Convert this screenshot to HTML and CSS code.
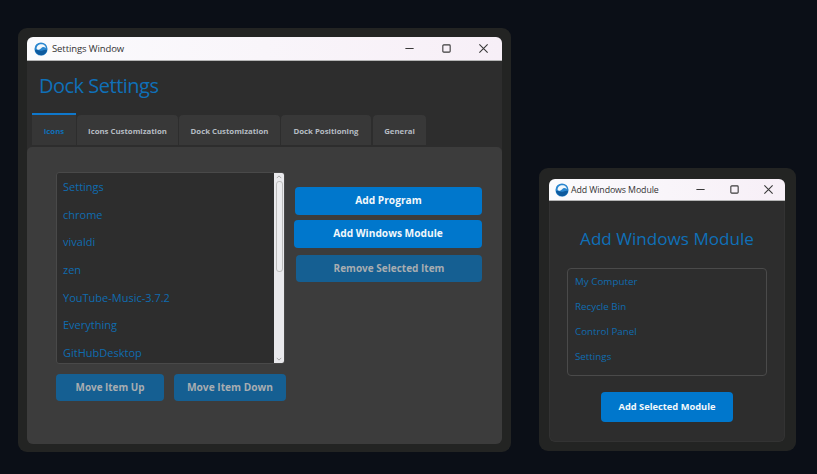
FILE: index.html
```html
<!DOCTYPE html>
<html lang="en">
<head>
<meta charset="utf-8">
<title>Dock Settings</title>
<link rel="stylesheet" href="styles.css">
</head>
<body>
<section class="frame frame-settings">
  <div class="window">
    <header class="titlebar">
      <svg class="app-icon" viewBox="0 0 16 16"><circle cx="8" cy="8" r="7.500" fill="#2a86cf"/><path d="M1 9.500c2-1.500 3.500.5 6.500.5s4.500-2 7.500-1c-.8 3.500-3.500 6-7 6s-6-2.500-7-5.500z" fill="#0e5a9e"/><path d="M3 8c-.3-3.500 3-6 6.500-5.300C12 3.200 13.500 5 13.500 7c-2-1.700-4-1.500-5.300 0C7 8.500 4.500 9.500 3 8z" fill="#f2f8fc"/></svg>
      <span class="window-title">Settings Window</span>
      <div class="controls">
        <svg class="ctl" viewBox="0 0 12 12"><path d="M1.500 6h9"/></svg>
        <svg class="ctl" viewBox="0 0 12 12"><rect x="2" y="2" width="8" height="8" rx="1"/></svg>
        <svg class="ctl" viewBox="0 0 12 12"><path d="M1.500 1.500l9 9M10.500 1.500l-9 9"/></svg>
      </div>
    </header>
    <div class="settings-body">
      <h1 class="heading">Dock Settings</h1>
      <nav class="tabs">
        <span class="tab tab-active">Icons</span>
        <span class="tab tab-ic">Icons Customization</span>
        <span class="tab tab-dc">Dock Customization</span>
        <span class="tab tab-dp">Dock Positioning</span>
        <span class="tab tab-ge">General</span>
      </nav>
      <div class="pane">
        <div class="left-col">
          <div class="list-wrap">
            <ul class="items">
              <li>Settings</li>
              <li>chrome</li>
              <li>vivaldi</li>
              <li>zen</li>
              <li>YouTube-Music-3.7.2</li>
              <li>Everything</li>
              <li>GitHubDesktop</li>
            </ul>
            <div class="scrollbar">
              <svg class="arrow" viewBox="0 0 8 5"><path d="M1 4l3-3 3 3"/></svg>
              <div class="thumb"></div>
              <svg class="arrow arrow-down" viewBox="0 0 8 5"><path d="M1 1l3 3 3-3"/></svg>
            </div>
          </div>
          <div class="move-row">
            <button class="btn btn-muted btn-up">Move Item Up</button>
            <button class="btn btn-muted btn-down">Move Item Down</button>
          </div>
        </div>
        <div class="right-col">
          <button class="btn btn-primary">Add Program</button>
          <button class="btn btn-primary btn-wide">Add Windows Module</button>
          <button class="btn btn-muted btn-narrow">Remove Selected Item</button>
        </div>
      </div>
    </div>
  </div>
</section>

<section class="frame frame-module">
  <div class="window">
    <header class="titlebar titlebar-small">
      <svg class="app-icon" viewBox="0 0 16 16"><circle cx="8" cy="8" r="7.500" fill="#2a86cf"/><path d="M1 9.500c2-1.500 3.500.5 6.500.5s4.500-2 7.500-1c-.8 3.500-3.500 6-7 6s-6-2.500-7-5.500z" fill="#0e5a9e"/><path d="M3 8c-.3-3.500 3-6 6.500-5.300C12 3.200 13.500 5 13.500 7c-2-1.700-4-1.500-5.300 0C7 8.500 4.500 9.500 3 8z" fill="#f2f8fc"/></svg>
      <span class="window-title window-title-small">Add Windows Module</span>
      <div class="controls controls-small">
        <svg class="ctl" viewBox="0 0 12 12"><path d="M1.500 6h9"/></svg>
        <svg class="ctl" viewBox="0 0 12 12"><rect x="2" y="2" width="8" height="8" rx="1"/></svg>
        <svg class="ctl" viewBox="0 0 12 12"><path d="M1.500 1.500l9 9M10.500 1.500l-9 9"/></svg>
      </div>
    </header>
    <div class="module-body">
      <h2 class="module-heading">Add Windows Module</h2>
      <ul class="module-list">
        <li>My Computer</li>
        <li>Recycle Bin</li>
        <li>Control Panel</li>
        <li>Settings</li>
      </ul>
      <button class="btn btn-primary btn-add">Add Selected Module</button>
    </div>
  </div>
</section>
</body>
</html>
```
FILE: styles.css
```css
* { box-sizing: border-box; }
html, body { margin: 0; height: 100%; }
body {
  background: #0b0f17;
  font-family: "Open Sans", "Noto Sans", sans-serif;
  overflow: hidden;
  position: relative;
}
.frame {
  position: absolute;
  background: #232423;
  border-radius: 9px;
}
.frame-settings { left: 18px; top: 28px; width: 493px; height: 424px; padding: 9px 9px 8px; }
.frame-module { left: 539px; top: 168px; width: 257px; height: 283px; padding: 11px 11px 9px 10px; }
.window {
  height: 100%;
  display: flex;
  flex-direction: column;
  border-radius: 6px;
  overflow: hidden;
  background: #2d2d2d;
}
.titlebar {
  height: 24px;
  flex: none;
  display: flex;
  align-items: center;
  padding-left: 7px;
  background: linear-gradient(90deg, #fbfbfd, #f7eff7);
  border-bottom: 1px solid #b5b5b5;
}
.titlebar-small { height: 22px; padding-left: 6px; }
.app-icon { width: 14px; height: 14px; flex: none; }
.window-title { margin-left: 4px; font-size: 9.500px; color: #333; letter-spacing: -.1px; }
.window-title-small { font-size: 8.800px; margin-left: 2px; }
.controls { margin-left: auto; display: flex; align-items: center; gap: 26px; padding-right: 13px; }
.controls-small { gap: 23px; padding-right: 11px; }
.ctl { width: 11px; height: 11px; fill: none; stroke: #3a3a3a; stroke-width: 1.200; }
.settings-body { flex: 1; display: flex; flex-direction: column; min-height: 0; }
.heading {
  margin: 11px 0 0 12px;
  height: 41px;
  font-size: 20px;
  line-height: 28px;
  font-weight: 400;
  color: #0f70b8;
  letter-spacing: -.5px;
}
.tabs { display: flex; padding-left: 5px; gap: 1px; height: 34px; flex: none; align-items: flex-end; }
.tab {
  height: 30px;
  margin-bottom: 2px;
  padding-top: 2px;
  display: flex;
  align-items: center;
  justify-content: center;
  background: #383838;
  border-radius: 4px 4px 0 0;
  font-size: 7.800px;
  font-weight: 700;
  color: #b5bcc2;
}
.tab-active {
  width: 44px;
  height: 32px;
  border-top: 2px solid #0f78cc;
  border-radius: 0;
  color: #0f6fb8;
  background: #363636;
}
.tab-ic { width: 101px; }
.tab-dc { width: 101px; }
.tab-dp { width: 90px; }
.tab-ge { width: 53px; margin-left: 1px; }
.pane {
  flex: 1;
  background: #3c3c3c;
  border-radius: 5px 5px 0 0;
  display: flex;
  padding: 25px 0 0 29px;
  min-height: 0;
}
.left-col { width: 230px; flex: none; }
.list-wrap {
  width: 229px;
  height: 192px;
  display: flex;
  background: #2d2d2d;
  border: 1px solid #494949;
  border-radius: 3px;
  overflow: hidden;
}
.items, .module-list { list-style: none; margin: 0; padding: 0; color: #0f6cb0; }
.items { flex: 1; padding: 0 0 0 6px; font-size: 11px; }
.items li { height: 27.700px; line-height: 27.700px; white-space: nowrap; }
.scrollbar {
  width: 10px;
  flex: none;
  background: #e9e9ec;
  display: flex;
  flex-direction: column;
  align-items: center;
  padding-top: 2px;
}
.arrow { width: 6px; height: 4px; flex: none; fill: none; stroke: #8d8d8d; stroke-width: 1; }
.arrow-down { margin-top: auto; margin-bottom: 2px; }
.thumb { width: 7px; height: 91px; margin-top: 2px; background: #ececee; border: 1px solid #bdbdbd; border-radius: 3px; }
.move-row { display: flex; gap: 10px; margin-top: 10px; }
.btn {
  border: 0;
  border-radius: 4px;
  font-family: inherit;
  font-weight: 700;
  font-size: 10.200px;
  padding: 0 0 2px;
  display: block;
}
.btn-primary { background: #0077cc; color: #f2f7fb; }
.btn-muted { background: #155f92; color: #a8adb1; }
.btn-up { width: 108px; height: 27px; font-size: 9.900px; }
.btn-down { width: 112px; height: 27px; }
.right-col { margin-left: 9px; padding-top: 15px; width: 187px; display: flex; flex-direction: column; }
.right-col .btn { height: 28px; width: 187px; }
.right-col .btn-wide { width: 188px; margin: 5px 0 0 -1px; }
.right-col .btn-narrow { width: 186px; height: 27px; margin: 7px 0 0 1px; font-size: 10px; }
.module-body {
  flex: 1;
  display: flex;
  flex-direction: column;
  align-items: center;
  border: 1px solid #333;
  border-top: 0;
  border-radius: 0 0 6px 6px;
}
.module-heading {
  margin: 25px 0 0;
  height: 42px;
  font-size: 17.100px;
  line-height: 26px;
  font-weight: 400;
  color: #0f70b8;
  white-space: nowrap;
}
.module-list {
  width: 200px;
  height: 108px;
  border: 1px solid #4a4a4a;
  border-radius: 4px;
  padding: 0 0 0 7px;
  font-size: 9.800px;
}
.module-list li { height: 25px; line-height: 25px; }
.btn-add { width: 132px; height: 30px; margin-top: 16px; font-size: 9.300px; }
```
